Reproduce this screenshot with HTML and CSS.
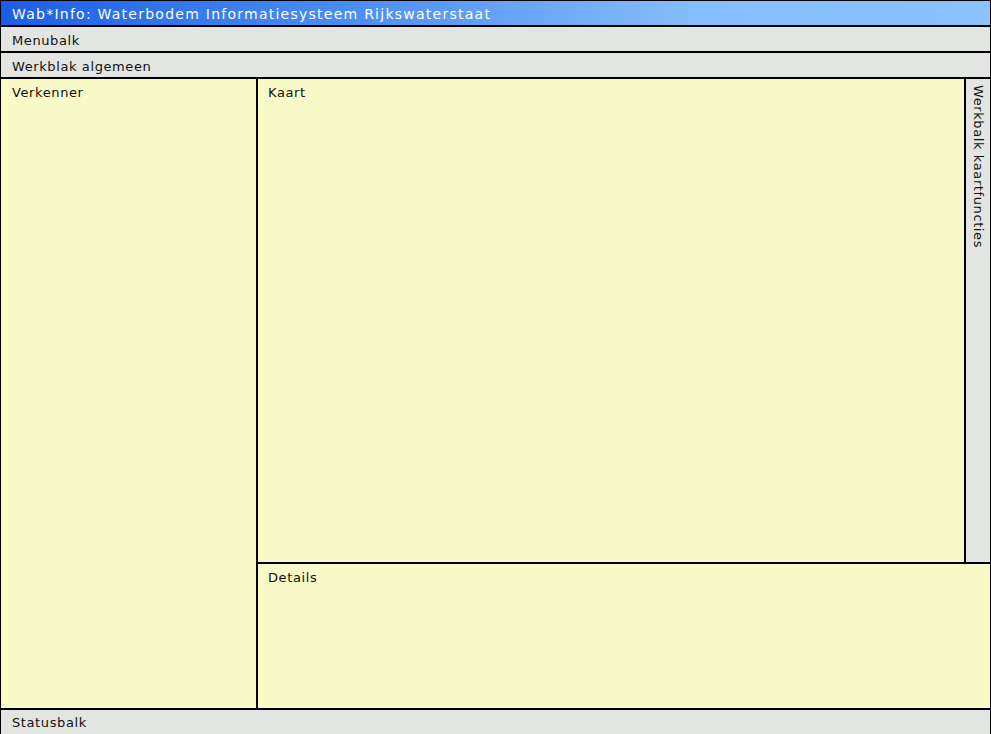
FILE: index.html
```html
<!DOCTYPE html>
<html>
<head>
<meta charset="utf-8">
<link rel="stylesheet" href="styles.css">
</head>
<body>
<div class="app">
  <div class="titlebar">Wab*Info: Waterbodem Informatiesysteem Rijkswaterstaat</div>
  <div class="bar">Menubalk</div>
  <div class="bar">Werkblak algemeen</div>
  <div class="main">
    <div class="pane verkenner">Verkenner</div>
    <div class="right">
      <div class="top">
        <div class="pane kaart">Kaart</div>
        <div class="toolbar"><span class="vtext">Werkbalk kaartfuncties</span></div>
      </div>
      <div class="pane details">Details</div>
    </div>
  </div>
  <div class="bar status">Statusbalk</div>
</div>
</body>
</html>
```
FILE: styles.css
```css
html, body {
  margin: 0;
  padding: 0;
  background: #ffffff;
}
body {
  font-family: "DejaVu Sans", Verdana, sans-serif;
  font-size: 13px;
  letter-spacing: 0.6px;
  color: #111;
}
.app {
  width: 991px;
  height: 734px;
  box-sizing: border-box;
  border: 1px solid #000;
  border-bottom: none;
  display: flex;
  flex-direction: column;
  overflow: hidden;
  background: #000;
  gap: 2px;
}
.titlebar {
  height: 24px;
  flex: none;
  background: linear-gradient(to right, #1b5ee6 0%, #4a8ef2 35%, #86bdfd 70%, #8cc2ff 100%);
  color: #fff;
  padding-left: 11px;
  line-height: 26px;
  font-size: 14px;
  letter-spacing: 1.25px;
}
.bar {
  height: 24px;
  flex: none;
  background: #e3e5e2;
  padding-left: 11px;
  line-height: 27px;
}
.main {
  flex: none;
  height: 629px;
  display: flex;
  gap: 2px;
}
.pane {
  background: #f8fac8;
  padding: 6px 0 0 10px;
  box-sizing: border-box;
  line-height: 16px;
}
.verkenner {
  width: 255px;
  flex: none;
  padding-left: 11px;
}
.right {
  flex: 1;
  display: flex;
  flex-direction: column;
  gap: 2px;
}
.top {
  height: 483px;
  flex: none;
  display: flex;
  gap: 2px;
}
.kaart {
  flex: 1;
}
.toolbar {
  width: 24px;
  flex: none;
  background: #e3e5e2;
  display: flex;
  justify-content: center;
  padding-top: 6px;
  box-sizing: border-box;
}
.vtext {
  writing-mode: vertical-rl;
  line-height: 24px;
}
.details {
  flex: 1;
}
.status {
  height: 24px;
  line-height: 26px;
}
```
